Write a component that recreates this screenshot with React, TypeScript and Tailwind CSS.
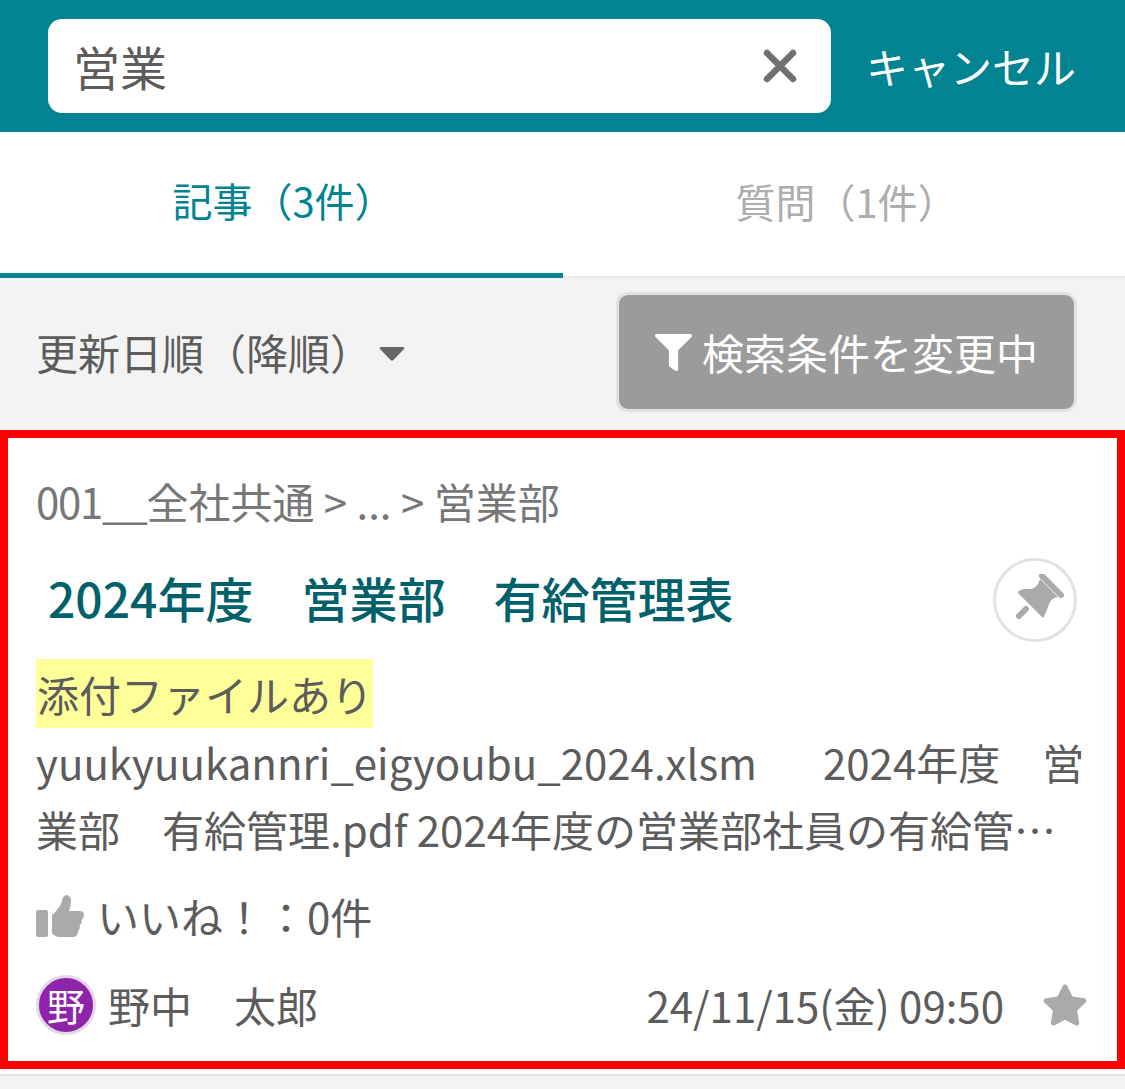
import React from "react";
import { FaFilter, FaStar } from "react-icons/fa";

const FONT = "font-['Noto_Sans_CJK_JP','Noto_Sans',sans-serif]";

export default function App() {
  return (
    <div className={`w-[1125px] h-[1089px] overflow-hidden bg-[#f3f3f3] text-[#5c5c5c] ${FONT}`}>
      {/* Search bar */}
      <header className="h-[132px] bg-[#028391] flex items-center pl-[48px] pr-[49px] pb-[1px]">
        <div className="w-[783px] h-[94px] bg-white rounded-[14px] flex items-center justify-between pl-[25px] pr-[34px]">
          <span className="text-[47px] leading-none">営業</span>
          <svg width="34" height="34" viewBox="0 0 34 34" className="text-[#707070]">
            <path d="M4 4 L30 30 M30 4 L4 30" stroke="currentColor" strokeWidth="6.5" strokeLinecap="round" />
          </svg>
        </div>
        <span className="ml-auto text-[42px] leading-none text-white">キャンセル</span>
      </header>

      {/* Tabs */}
      <nav className="h-[146px] bg-white flex border-b-2 border-[#e8e8e8]">
        <div className="w-[563px] border-b-[5px] border-[#028391] -mb-[2px] flex items-center justify-center pb-[6px] text-[40px] leading-none text-[#028391]">
          <span className="ml-[4px]">記事（3件）</span>
        </div>
        <div className="flex-1 flex items-center justify-center pb-[6px] text-[40px] leading-none text-[#adadad]">
          <span className="ml-[5px]">質問（1件）</span>
        </div>
      </nav>

      {/* Sort and filter */}
      <div className="h-[152px] flex items-center justify-between pl-[36px] pr-[48px] pb-[4px]">
        <div className="flex items-center gap-[7px]">
          <span className="text-[42px] leading-none">更新日順（降順）</span>
          <svg width="26" height="15" viewBox="0 0 26 15" className="mt-[2px] text-[#666666]">
            <path d="M2 1 H24 Q26 1 25 3 L14.5 14 Q13 15 11.5 14 L1 3 Q0 1 2 1 Z" fill="currentColor" />
          </svg>
        </div>
        <div className="w-[461px] h-[120px] bg-[#9b9b9b] border-[3px] border-[#e2e2e2] rounded-[12px] flex items-center justify-center gap-[10px] text-white">
          <FaFilter className="text-[37px]" />
          <span className="text-[42px] leading-none">検索条件を変更中</span>
        </div>
      </div>

      {/* Article card */}
      <article className="h-[639px] bg-white border-[8px] border-[#ff0000] pl-[28px] pr-[29px] pt-[37px]">
        <div className="text-[42px] leading-[52px] text-[#777777]">
          <span className="tracking-[-1.3px]">001__</span>全社共通 &gt; ... &gt; 営業部
        </div>
        <div className="mt-[28px] h-[84px] flex items-center justify-between">
          <h2 className="ml-[12px] text-[48px] leading-none font-medium text-[#00616b]">2024年度　営業部　有給管理表</h2>
          <div className="w-[84px] h-[84px] shrink-0 mr-[11px] mt-[6px] rounded-full border-[3px] border-[#e2e2e2] flex items-center justify-center">
            <svg width="48" height="48" viewBox="0 0 48 48" className="ml-[9px] -mt-[4px] shrink-0 text-[#aaaaaa]">
              <path d="M26 2 L45 21 M3 42 L10 35" stroke="currentColor" strokeWidth="6" strokeLinecap="round" />
              <path
                d="M24 5 L42 23 Q35 24 33 30 Q31 37 27 44 L2 19 Q2 16 8 15 L15 15 Q22 13 24 5 Z"
                fill="currentColor"
              />
            </svg>
          </div>
        </div>
        <div className="mt-[20px]">
          <span className="inline-block h-[69px] pl-[1px] bg-[#ffff99] text-[42px] leading-[69px]">添付ファイルあり</span>
        </div>
        <p className="w-[1060px] text-[42px] leading-[67px]">
          <span className="block whitespace-pre">
            yuukyuukannri_eigyoubu_2024.xlsm<span className="inline-block w-[66px]" />2024年度　営
          </span>
          <span className="block whitespace-pre">業部　有給管理.pdf 2024年度の営業部社員の有給管…</span>
        </p>
        <div className="mt-[24px] flex items-center gap-[13px]">
          <svg width="48" height="44" viewBox="0 0 48 44" className="text-[#aaaaaa]">
            <rect x="0" y="16" width="12" height="27" rx="2" fill="currentColor" />
            <path
              d="M16 21 Q24 14 26 7 Q27 1 31 1 Q35 2 35 7 Q35 12 33 17 L45 17 Q48 18 48 21 Q48 24 46 25 Q46 29 44 31 Q44 35 42 37 Q42 43 37 43 L23 43 Q18 42 16 39 Z"
              fill="currentColor"
            />
          </svg>
          <span className="text-[42px] leading-[60px]">いいね！：0件</span>
        </div>
        <div className="mt-[29px] flex items-center">
          <div className="w-[60px] h-[60px] rounded-full bg-[#8e24aa] border-[3px] border-[#e2d8e6] flex items-center justify-center text-white text-[38px] leading-none">
            野
          </div>
          <span className="ml-[12px] text-[42px] leading-none">野中　太郎</span>
          <span className="ml-auto text-[42px] leading-none">24/11/15(金) 09:50</span>
          <FaStar className="ml-[38px] text-[46px] text-[#aaaaaa]" />
        </div>
      </article>

      <div className="h-[7px] bg-white border-b-[2px] border-[#e2e2e2]" />
    </div>
  );
}
